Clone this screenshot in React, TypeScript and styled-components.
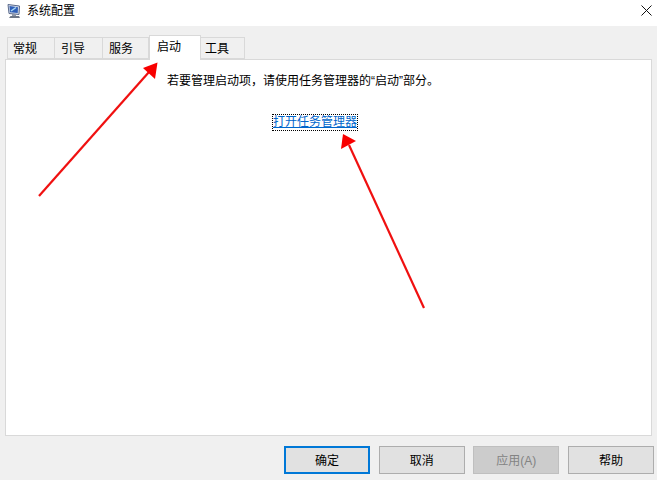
import React from 'react';
import styled, { createGlobalStyle } from 'styled-components';

const FONT = `"Liberation Sans", "Noto Sans CJK SC", sans-serif`;

const GlobalStyle = createGlobalStyle`
  html, body {
    margin: 0;
    padding: 0;
    background: #f0f0f0;
  }
`;

const Window = styled.div`
  position: relative;
  width: 657px;
  height: 480px;
  display: flex;
  flex-direction: column;
  overflow: hidden;
  background: #f0f0f0;
  font-family: ${FONT};
  font-size: 12px;
  color: #000;
`;

const TitleBar = styled.div`
  box-sizing: border-box;
  height: 26px;
  background: #fff;
  display: flex;
  align-items: center;
  padding: 0 5px 5px 6px;
  gap: 5px;
`;

const TitleText = styled.span`
  flex: 1;
  line-height: 20px;
`;

const Body = styled.div`
  flex: 1;
  display: flex;
  flex-direction: column;
  padding: 11px 5px 0;
`;

const TabRow = styled.div`
  height: 22px;
  display: flex;
  align-items: flex-end;
  padding-left: 2px;
  position: relative;
  z-index: 1;
`;

const Tab = styled.div<{ $active?: boolean; $width: number; $pad: number }>`
  box-sizing: border-box;
  width: ${p => p.$width}px;
  height: ${p => (p.$active ? 25 : 22)}px;
  margin-bottom: ${p => (p.$active ? -1 : 0)}px;
  background: ${p => (p.$active ? '#fff' : '#f0f0f0')};
  border: 1px solid #d9d9d9;
  border-left-width: ${p => (p.$active ? 1 : 0)}px;
  border-bottom-width: ${p => (p.$active ? 0 : 1)}px;
  padding-left: ${p => p.$pad}px;
  line-height: 22px;
  &:first-child {
    border-left-width: 1px;
  }
`;

const Panel = styled.div`
  box-sizing: border-box;
  height: 377px;
  background: #fff;
  border: 1px solid #d9d9d9;
  display: flex;
  flex-direction: column;
  align-items: flex-start;
  padding: 12px 0 0 161px;
`;

const Hint = styled.div`
  line-height: 18px;
`;

const LinkText = styled.a`
  margin: 25px 0 0 106px;
  line-height: 15px;
  color: #0066cc;
  text-decoration: underline;
  outline: 1px dotted #000;
`;

const Footer = styled.div`
  box-sizing: border-box;
  height: 44px;
  display: flex;
  justify-content: flex-end;
  align-items: flex-start;
  gap: 8.67px;
  padding: 10px 3px 0 0;
`;

const DialogButton = styled.div<{ $primary?: boolean; $disabled?: boolean }>`
  box-sizing: border-box;
  width: 86px;
  height: 28px;
  padding-bottom: 2px;
  display: flex;
  align-items: center;
  justify-content: center;
  background: ${p => (p.$disabled ? '#cccccc' : '#e1e1e1')};
  border: ${p => (p.$primary ? '2px solid #0078d7' : p.$disabled ? '1px solid #bfbfbf' : '1px solid #adadad')};
  color: ${p => (p.$disabled ? '#838383' : '#000')};
`;

const Overlay = styled.svg`
  position: absolute;
  left: 0;
  top: 0;
  z-index: 2;
  pointer-events: none;
`;

const AppIcon = () => (
  <svg width="16" height="16" viewBox="0 0 16 16">
    <path d="M2 1.5 L13.5 3 L13 11.5 L3 10.5 Z" fill="#d5dcea" stroke="#5a6a8c" />
    <path d="M3.5 3 L12 4.2 L11.7 10 L4 9.2 Z" fill="#2f5fb8" />
    <path d="M5 8 L10 4.5" stroke="#a9d8f5" strokeWidth="1.5" />
    <rect x="6" y="11" width="4" height="2" fill="#8d96a8" />
    <path d="M3 15 L4.5 13 L13 13 L14 15 Z" fill="#6d7686" />
  </svg>
);

const CloseIcon = () => (
  <svg width="11" height="11" viewBox="0 0 11 11">
    <path d="M0.5 0.5 L10.5 10.5 M10.5 0.5 L0.5 10.5" stroke="#111" strokeWidth="1" />
  </svg>
);

const tabs = [
  { label: '常规', width: 48, pad: 5 },
  { label: '引导', width: 48, pad: 6 },
  { label: '服务', width: 46, pad: 6 },
  { label: '启动', width: 52, pad: 7, active: true },
  { label: '工具', width: 44, pad: 4 },
];

const App: React.FC = () => (
  <Window>
    <GlobalStyle />
    <TitleBar>
      <AppIcon />
      <TitleText>系统配置</TitleText>
      <CloseIcon />
    </TitleBar>
    <Body>
      <TabRow>
        {tabs.map(t => (
          <Tab key={t.label} $active={t.active} $width={t.width} $pad={t.pad}>
            {t.label}
          </Tab>
        ))}
      </TabRow>
      <Panel>
        <Hint>若要管理启动项，请使用任务管理器的“启动”部分。</Hint>
        <LinkText>打开任务管理器</LinkText>
      </Panel>
    </Body>
    <Footer>
      <DialogButton $primary>确定</DialogButton>
      <DialogButton>取消</DialogButton>
      <DialogButton $disabled>应用(A)</DialogButton>
      <DialogButton>帮助</DialogButton>
    </Footer>
    <Overlay width="657" height="480" viewBox="0 0 657 480">
      <path d="M39 196 L149 72" stroke="#f01010" strokeWidth="2.2" fill="none" />
      <path d="M157.5 62.5 L143 68 L155 79 Z" fill="#f80000" />
      <path d="M424 308 L349 145" stroke="#f01010" strokeWidth="2.2" fill="none" />
      <path d="M343 134 L341 149 L356 141 Z" fill="#f80000" />
    </Overlay>
  </Window>
);

export default App;
